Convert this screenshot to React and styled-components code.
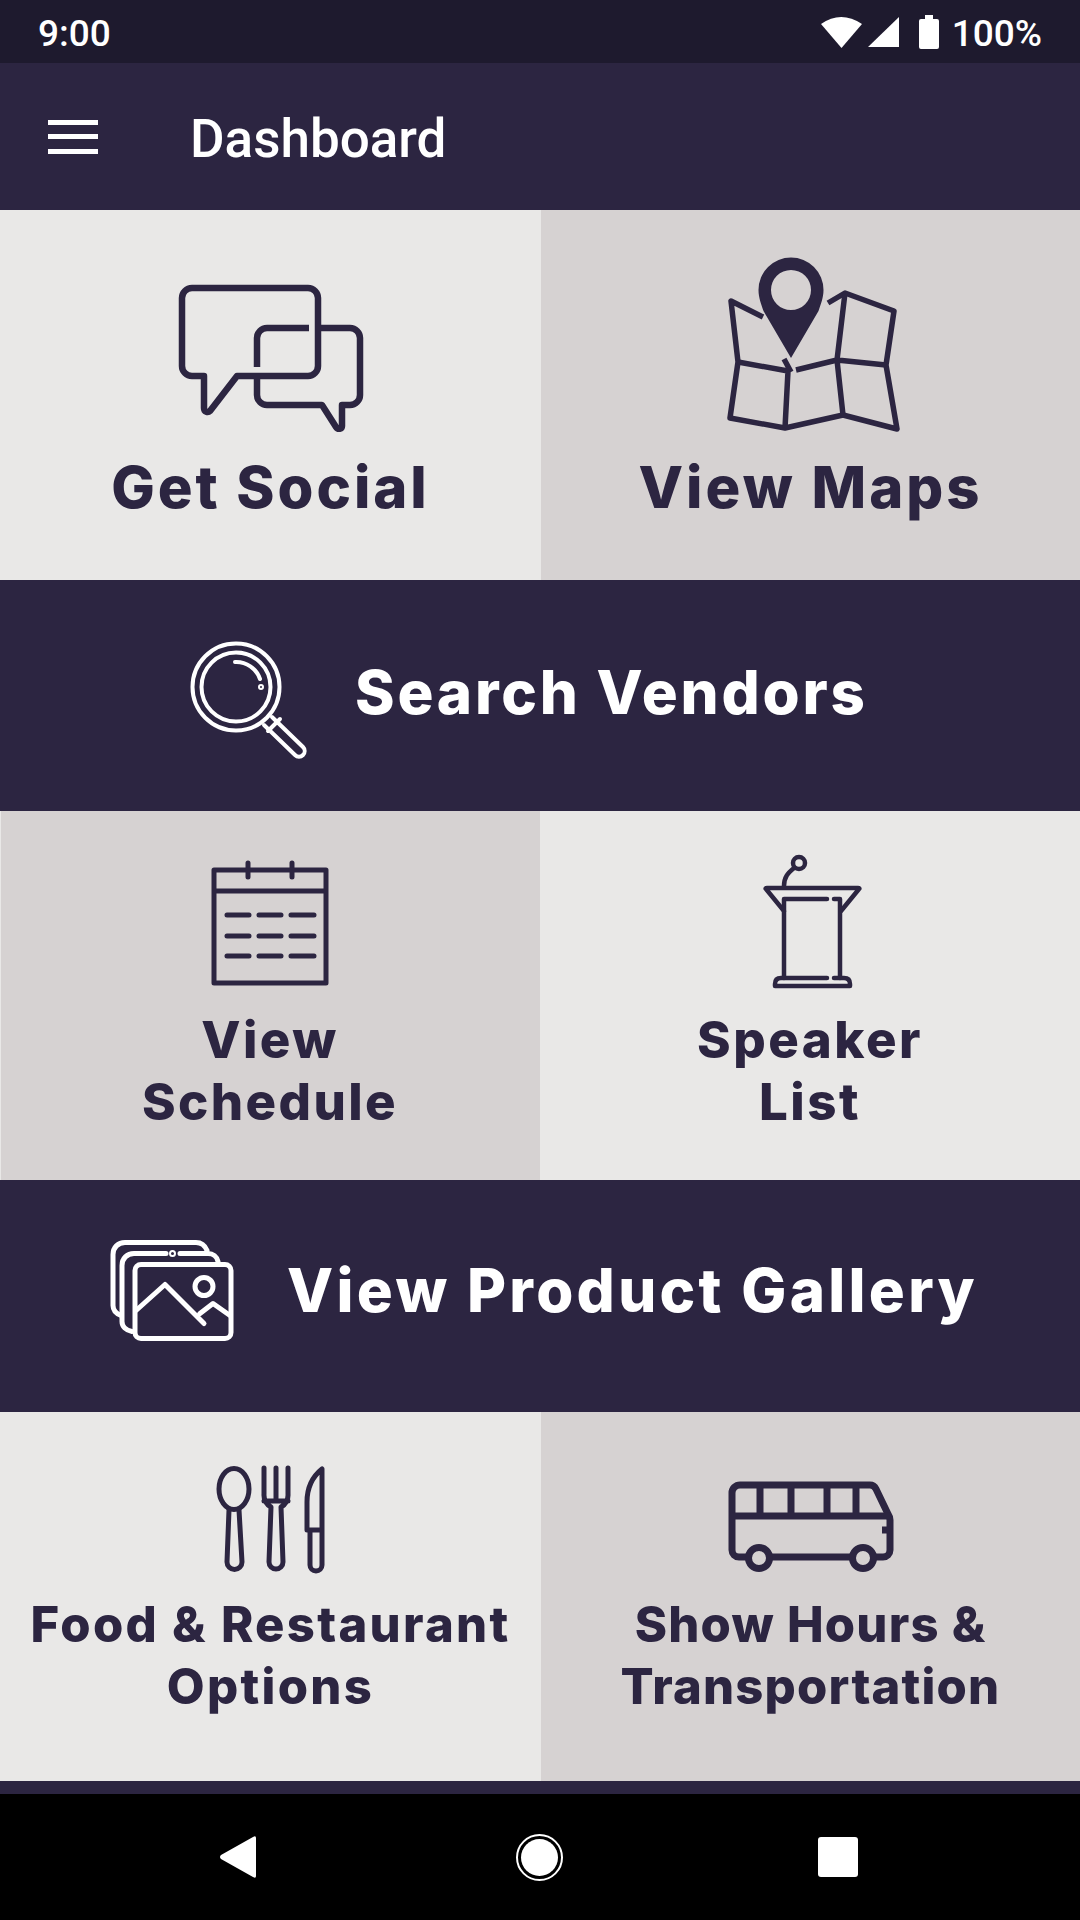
import styled, { createGlobalStyle } from "styled-components";

const INK = "#2c2541";
const LIGHT = "#e9e8e7";
const DARK = "#d6d2d2";

const GlobalStyle = createGlobalStyle`
  html, body { margin: 0; padding: 0; background: #000; }
  body { font-family: "Inter", "Liberation Sans", sans-serif; }
`;

const Screen = styled.div`
  width: 1080px;
  height: 1920px;
  display: flex;
  flex-direction: column;
  overflow: hidden;
`;

const StatusBar = styled.div`
  height: 63px;
  flex: none;
  background: #1e1a2e;
  color: #fff;
  display: flex;
  align-items: center;
  justify-content: space-between;
  padding: 0 38px;
  font: 500 37px "Roboto", sans-serif;
`;

const StatusText = styled.span`
  padding-top: 3px;
`;

const StatusIcons = styled.div`
  display: flex;
  align-items: center;
`;

const StatusGlyph = styled.svg`
  display: block;
  margin-right: ${(p) => p.$after}px;
`;

const AppBar = styled.header`
  height: 147px;
  flex: none;
  background: ${INK};
  display: flex;
  align-items: center;
  padding-left: 48px;
`;

const Burger = styled.div`
  width: 50px;
  height: 34px;
  margin-right: 92px;
  display: flex;
  flex-direction: column;
  justify-content: space-between;
  span {
    display: block;
    height: 5px;
    background: #fff;
  }
`;

const Title = styled.h1`
  margin: 4px 0 0;
  color: #fff;
  font: 500 53px "Roboto", sans-serif;
`;

const Row = styled.div`
  height: ${(p) => p.$h}px;
  flex: none;
  display: grid;
  grid-template-columns: ${(p) => p.$split}px 1fr;
`;

const Cell = styled.button`
  border: 0;
  margin: 0;
  padding: ${(p) => p.$pad}px 0 0;
  background: ${(p) => (p.$dark ? DARK : LIGHT)};
  color: ${INK};
  display: flex;
  flex-direction: column;
  align-items: center;
  font-family: inherit;
  ${(p) => p.$edge && `box-shadow: inset 1px 0 0 ${LIGHT};`}
`;

const Icon = styled.svg`
  display: block;
  flex: none;
  fill: none;
  stroke: currentColor;
  stroke-linecap: ${(p) => p.$cap || "round"};
  stroke-linejoin: round;
`;

const Label = styled.span`
  margin-top: ${(p) => p.$gap}px;
  font-size: ${(p) => p.$size}px;
  line-height: 62px;
  font-weight: 800;
  letter-spacing: ${(p) => p.$track || 0}px;
  text-align: center;
  white-space: pre-line;
`;

const Banner = styled.button`
  height: ${(p) => p.$h}px;
  flex: none;
  border: 0;
  margin: 0;
  background: ${INK};
  color: #fff;
  display: flex;
  align-items: center;
  padding: 0 0 0 ${(p) => p.$left}px;
  gap: ${(p) => p.$gap}px;
  font-family: inherit;
`;

const BannerText = styled.span`
  font-size: 60px;
  font-weight: 800;
  letter-spacing: ${(p) => p.$track}px;
  line-height: 62px;
  padding-bottom: ${(p) => p.$lift}px;
`;

const Strip = styled.div`
  height: 13px;
  flex: none;
  background: ${INK};
`;

const NavBar = styled.nav`
  flex: 1;
  background: #000;
  display: grid;
  grid-template-columns: 296px 47px 1fr;
  align-items: center;
  padding-left: 220px;
`;

const NavBack = styled.svg`
  display: block;
  fill: #fff;
`;

const NavHome = styled.div`
  width: 47px;
  height: 47px;
  box-sizing: border-box;
  border: 2px solid #fff;
  border-radius: 50%;
  padding: 3px;
  &::after {
    content: "";
    display: block;
    width: 100%;
    height: 100%;
    background: #fff;
    border-radius: 50%;
  }
`;

const NavRecent = styled.div`
  margin-left: 255px;
  width: 40px;
  height: 40px;
  background: #fff;
  border-radius: 3px;
`;

const ChatIcon = () => (
  <Icon width="241" height="210" viewBox="0 0 241 210" strokeWidth="6.500">
    <path d="M87 136H158a10 10 0 0 0 10-10V58a10 10 0 0 0-10-10H42a10 10 0 0 0-10 10V126a10 10 0 0 0 10 10H54V168c0 4 4 5 6 3Z" />
    <path d="M159 88H117a10 10 0 0 0-10 10V127" strokeLinecap="butt" />
    <path d="M107 139V155a10 10 0 0 0 10 10H172L186 187c2 3 6 2 6-1V165H200a10 10 0 0 0 10-10V98a10 10 0 0 0-10-10H171" strokeLinecap="butt" />
  </Icon>
);

const MapIcon = () => (
  <Icon width="221" height="210" viewBox="0 0 221 210" strokeWidth="5.500" $cap="butt">
    <path
      d="M91 17.500a32.500 32.500 0 0 0-32.500 32.500c0 8 3 15 5 21L91 118l27.500-47c2-6 5-13 5-21A32.500 32.500 0 0 0 91 17.500ZM91 30a20 20 0 1 1 0 40a20 20 0 0 1 0-40Z"
      fill="currentColor"
      fillRule="evenodd"
      stroke="none"
    />
    <path d="M63 77L31 61L38 122L30 178L85 188L143 175L197 189L186 125L194 71L145 53L128 63" />
    <path d="M145 53L137 120L143 175M85 188L88 131L38 122M96 130L137 120L186 125M84 119L91 132" />
  </Icon>
);

const SearchIcon = () => (
  <Icon width="160" height="150" viewBox="0 0 160 150" strokeWidth="4">
    <circle cx="66" cy="66" r="43.500" />
    <circle cx="66" cy="66" r="34.500" />
    <path d="M65 41a25 25 0 0 1 25 17" />
    <circle cx="91" cy="66" r="1" />
    <path d="M94 104L125 134a5.500 5.500 0 0 0 8-8L102 96M98 110L110 98" />
  </Icon>
);

const CalendarIcon = () => (
  <Icon width="160" height="150" viewBox="0 0 160 150" strokeWidth="5">
    <path d="M24 20H136V133H24ZM24 41H136M58 13V27M102 13V27" />
    <path d="M37 65H59M69 65H91M101 65H124M37 86H59M69 86H91M101 86H124M37 106H59M69 106H91M101 106H124" />
  </Icon>
);

const PodiumIcon = () => (
  <Icon width="140" height="150" viewBox="0 5 140 150" strokeWidth="4.500">
    <path d="M44 41C44 32 48 28 54 23" />
    <circle cx="59" cy="18" r="6" />
    <path d="M44 66L26 44Q25 43 27 43H118Q120 43 119 44L101 66" />
    <path d="M87 54H44V133H87M94 54H100V133H94" />
    <path d="M44 133H41Q35 133 35 139V141H110V139Q110 133 104 133H100" />
  </Icon>
);

const GalleryIcon = () => (
  <Icon width="150" height="125" viewBox="0 8.500 150 125" strokeWidth="5">
    <rect x="35" y="39" width="96" height="74" rx="6" />
    <path d="M36 85L65 59L104 98M100 88L113 78L130 90" />
    <circle cx="104" cy="61" r="9" />
    <path d="M32 106C26 105 22 101 22 96V40C22 33 27 28 34 28H66M80 28H108C113 28 117 31 118 36" />
    <circle cx="72.500" cy="28" r="1" />
    <path d="M21 90C16 88 13 84 13 80V29C13 22 18 17 25 17H96C101 17 105 20 107 25" />
  </Icon>
);

const CutleryIcon = () => (
  <Icon width="141" height="130" viewBox="0 0 141 130" strokeWidth="5">
    <ellipse cx="34" cy="39" rx="15" ry="20.500" />
    <path d="M29 60L27 112a7.500 7.500 0 0 0 15 0L39 60" />
    <path d="M64 18V44a14 14 0 0 0 7 13L69 112a7 7 0 0 0 14 0L81 57a14 14 0 0 0 7-13V18M76 18V50M64 51H88" />
    <path d="M122 19V115a6 6 0 0 1-12 0V80M122 80H107V52Q107 31 122 19Z" />
  </Icon>
);

const BusIcon = () => (
  <Icon width="201" height="130" viewBox="0 -10 201 130" strokeWidth="7">
    <path d="M38 97H29a7 7 0 0 1-7-7V33a8 8 0 0 1 8-8H160c3 0 5 2 6 4L178 54q2 3 2 6V90a7 7 0 0 1-7 7H165M60 97H142" />
    <path d="M22 56H180M50 25V56M81 25V56M117 25V56M146 25V56M172 70H180" strokeLinecap="butt" />
    <circle cx="49" cy="98" r="10.500" />
    <circle cx="153" cy="98" r="10.500" />
  </Icon>
);

const App = () => (
  <Screen>
    <GlobalStyle />
    <StatusBar>
      <StatusText>9:00</StatusText>
      <StatusIcons>
        <StatusGlyph $after={6} width="41" height="32" viewBox="0 0 41 32" fill="#fff">
          <path d="M0 8Q20-6 41 8L20.500 32Z" />
        </StatusGlyph>
        <StatusGlyph $after={20} width="31" height="30" viewBox="0 0 31 30" fill="#fff">
          <path d="M31 0V30H0Z" />
        </StatusGlyph>
        <StatusGlyph $after={13} width="20" height="34" viewBox="0 0 20 34" fill="#fff">
          <path d="M6 0H14V4H18Q20 4 20 6V32Q20 34 18 34H2Q0 34 0 32V6Q0 4 2 4H6Z" />
        </StatusGlyph>
        <StatusText>100%</StatusText>
      </StatusIcons>
    </StatusBar>

    <AppBar>
      <Burger>
        <span />
        <span />
        <span />
      </Burger>
      <Title>Dashboard</Title>
    </AppBar>

    <Row $h={370} $split={541}>
      <Cell $pad={30}>
        <ChatIcon />
        <Label $gap={6} $size={58} $track={2.95}>Get Social</Label>
      </Cell>
      <Cell $pad={30} $dark>
        <MapIcon />
        <Label $gap={6} $size={58} $track={3}>View Maps</Label>
      </Cell>
    </Row>

    <Banner $h={231} $left={170} $gap={25}>
      <SearchIcon />
      <BannerText $track={2.8} $lift={7}>Search Vendors</BannerText>
    </Banner>

    <Row $h={369} $split={540}>
      <Cell $pad={39} $dark $edge>
        <CalendarIcon />
        <Label $gap={9} $size={51} $track={2.4}>{"View\nSchedule"}</Label>
      </Cell>
      <Cell $pad={39}>
        <PodiumIcon />
        <Label $gap={9} $size={51} $track={2.5}>{"Speaker\nList"}</Label>
      </Cell>
    </Row>

    <Banner $h={232} $left={100} $gap={37}>
      <GalleryIcon />
      <BannerText $track={3.3} $lift={12}>View Product Gallery</BannerText>
    </Banner>

    <Row $h={369} $split={541}>
      <Cell $pad={38}>
        <CutleryIcon />
        <Label $gap={14} $size={49} $track={2.3}>{"Food & Restaurant\nOptions"}</Label>
      </Cell>
      <Cell $pad={38} $dark>
        <BusIcon />
        <Label $gap={14} $size={49} $track={1.2}>{"Show Hours &\nTransportation"}</Label>
      </Cell>
    </Row>

    <Strip />

    <NavBar>
      <NavBack width="37" height="42" viewBox="0 0 37 42">
        <path d="M1 19L33 1Q36-1 36 2V40Q36 43 33 41L1 23Q-1 21 1 19Z" />
      </NavBack>
      <NavHome />
      <NavRecent />
    </NavBar>
  </Screen>
);

export default App;
